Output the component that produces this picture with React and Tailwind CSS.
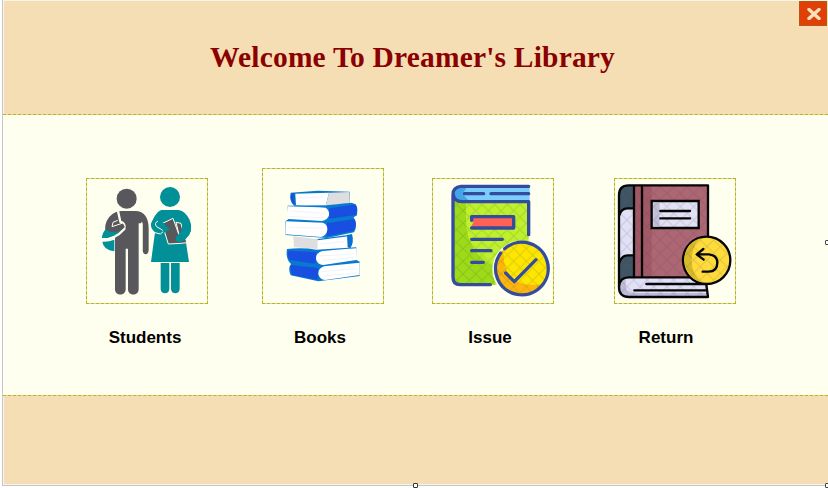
import React from "react";

function StudentsIcon() {
  return (
    <svg viewBox="21 57 360 372" className="block h-[124px] w-[120px] bg-[#fffff0]">
      <g fill="#58575c">
        <circle cx="140" cy="116" r="30" />
        <path d="M122 153H166C193 153 206 174 206 205V270C206 287 188 287 188 270V190H176V388C176 409 144 409 144 388V266H137V388C137 409 105 409 105 388V232L78 215Q72 204 80 183Q92 157 122 153Z" />
      </g>
      <path d="M77 208Q66 220 66 234Q90 236 107 225L128 207Q98 224 77 208ZM67 245Q70 270 103 274V239Q87 246 67 245Z" fill="#018f98" />
      <path d="M66 239Q105 239 133 207Q137 190 121 185L114 153" fill="none" stroke="#fffff0" strokeWidth="7" />
      <path d="M78 205Q93 223 119 213L134 202Q132 190 123 190L104 197L111 182L101 190L98 203" fill="#58575c" />
      <path d="M113 181L99 187L96 200L126 190" fill="none" stroke="#fffff0" strokeWidth="3" />
      <path d="M185 187V270" stroke="#fffff0" strokeWidth="4" />
      <g fill="#018f98">
        <circle cx="270" cy="111" r="30" />
        <path d="M244 150H296Q316 153 329 180Q342 213 316 235L327 306H213L225 217Q205 200 218 180Q229 155 244 150Z" />
        <path d="M242 309H268V386C268 404 242 404 242 386ZM273 309H299V386C299 404 273 404 273 386Z" />
      </g>
      <path d="M234 183Q221 190 230 200L252 213L241 222L217 216" fill="none" stroke="#fffff0" strokeWidth="3" />
      <path d="M246 191L279 175L297 225L318 238L320 248L303 250L265 252Z" fill="#58575c" stroke="#fffff0" strokeWidth="3" />
      <path d="M288 187L303 190L309 214L297 224Z" fill="#58575c" stroke="#fffff0" strokeWidth="3" />
      <path d="M303 180Q315 210 289 229Q281 248 302 247Q337 229 333 199Q325 170 307 166Z" fill="#018f98" />
      <path d="M245 199Q236 202 231 194Q240 191 233 183L250 189L270 208L251 219Z" fill="#018f98" />
    </svg>
  );
}

function BooksIcon() {
  return (
    <svg viewBox="24 27 360 402" className="block h-[134px] w-[120px] bg-[#fffff0]">
      <path d="M107 98L188 92L284 95L283 130L118 137Q101 124 107 98Z" fill="#0878c9" />
      <path d="M121 101L222 98L212 137L123 135Z" fill="#fff" />
      <path d="M222 98L283 96V129L212 137Z" fill="#dedddf" />
      <path d="M110 100H118V136Q103 121 110 100Z" fill="#194fda" />
      <path d="M98 137L214 136L290 128Q312 132 306 166L296 172Q310 195 297 217L216 234L92 225L91 184L100 178Z" fill="#087bd1" />
      <path d="M223 145L302 133Q311 148 302 165L223 176ZM216 190L298 177Q308 190 296 212L216 229Z" fill="#194fe0" />
      <path d="M99 139Q176 142 212 143Q224 151 222 166Q218 180 201 183L99 177ZM92 184L203 188Q218 193 217 209Q216 225 198 231L92 223Z" fill="#fff" />
      <path d="M115 229L188 238V267L117 262Z" fill="#dedddf" />
      <path d="M188 239L280 227L283 263L188 270Z" fill="#fff" />
      <path d="M188 239L280 227" stroke="#087bd1" strokeWidth="4" />
      <path d="M276 225L291 222Q298 246 286 265L278 262Z" fill="#0870cf" />
      <path d="M96 267Q143 262 184 269L304 262L303 299L314 305V348L190 364L107 346Q98 326 108 312Q91 296 96 267Z" fill="#0878d0" />
      <path d="M100 272L184 277L181 311L105 300Q95 290 100 272ZM107 315L190 324L188 359L112 345Q104 328 107 315Z" fill="#194fe0" />
      <path d="M304 265Q234 270 203 273Q182 278 183 296Q186 314 205 315L304 300ZM314 308L207 319Q189 325 190 342Q193 359 211 360L314 345Z" fill="#fff" />
      <path d="M125 114L208 111M110 153L208 160M105 170L205 173M102 203L208 204M196 252L268 245M193 288L295 282M202 302L294 292M200 335L303 326M204 348L303 339" fill="none" stroke="#e9edf5" strokeWidth="2" />
    </svg>
  );
}

function IssueIcon() {
  return (
    <svg viewBox="24 57 360 372" className="block h-[124px] w-[120px] bg-[#fffff0]">
      <defs>
        <pattern id="issue-lattice" width="38" height="38" patternUnits="userSpaceOnUse">
          <path d="M0 0L38 38M38 0L0 38" stroke="#576d30" strokeOpacity=".22" strokeWidth="3" />
        </pattern>
      </defs>
      <path d="M85 105Q91 125 110 125H311V374H105Q85 374 85 354Z" fill="#bef02c" />
      <path d="M85 110Q98 126 123 125V185Q126 277 210 321V374H103Q85 374 85 354Z" fill="#9dda18" />
      <path d="M314 78H108Q84 80 84 102Q88 124 110 124H314Z" fill="#7bcdfb" />
      <path d="M108 80Q90 84 90 101Q92 121 113 121H130L112 101L127 80Z" fill="#42a5e8" />
      <path d="M85 126H311V374H85Z" fill="url(#issue-lattice)" />
      <path d="M139 170H266V204H137L145 186Z" fill="#ff6254" />
      <g fill="none" stroke="#344c9e" strokeWidth="10" strokeLinecap="round" strokeLinejoin="round">
        <path d="M311 79H108Q84 81 84 104V352Q84 374 105 374H196M85 103Q88 125 110 125H311V224" />
        <path d="M118 101H176M198 101H311M140 181V170H266V204H140M140 238H232M140 272H198M140 307H175" />
      </g>
      <circle cx="288" cy="328" r="86" fill="#fffff0" />
      <circle cx="288" cy="328" r="79" fill="#ffe600" />
      <path d="M236 268Q198 302 211 349Q227 400 279 407Q328 410 353 373Q286 383 257 349Q232 321 236 268Z" fill="#ffb60b" />
      <circle cx="288" cy="328" r="78" fill="url(#issue-lattice)" />
      <path d="M239 266A79 79 0 1 1 227 279" fill="none" stroke="#344c9e" strokeWidth="10" strokeLinecap="round" />
      <path d="M242 339L268 365L333 299" fill="none" stroke="#344c9e" strokeWidth="10" strokeLinecap="round" strokeLinejoin="round" />
    </svg>
  );
}

function ReturnIcon() {
  return (
    <svg viewBox="24 57 360 372" className="block h-[124px] w-[120px] bg-[#fffff0]">
      <defs>
        <pattern id="return-lattice" width="40" height="40" patternUnits="userSpaceOnUse">
          <path d="M0 0L40 40M40 0L0 40" stroke="#443d4c" strokeOpacity=".16" strokeWidth="3" />
        </pattern>
      </defs>
      <path d="M36 106Q36 76 65 76H303V352H65L36 380Z" fill="#ad6673" />
      <path d="M36 106Q36 76 65 76H80V352H65L36 380Z" fill="#405565" />
      <path d="M36 169Q42 145 62 145H80V286H62Q44 286 36 312Z" fill="#e1e0f6" />
      <path d="M81 78H104V352H81ZM107 78H134V352H107Z" fill="#9d5361" fillOpacity=".65" />
      <path d="M303 352H64Q36 352 36 383Q36 411 66 411H303L298 378Z" fill="#e1e0f6" />
      <path d="M38 382Q43 411 68 411H303V399H80Q57 396 56 379V355Q39 361 38 382Z" fill="#bdbbd7" />
      <path d="M40 90L65 76H303V411H66L38 395Z" fill="url(#return-lattice)" />
      <g fill="none" stroke="#060606" strokeWidth="7" strokeLinejoin="round">
        <path d="M303 230V76H65Q36 76 36 106V382Q36 411 66 411H303L298 374M36 380Q38 352 65 352H255M81 76V352M105 76V352M36 169Q41 145 62 145H80M36 312Q42 286 62 286H80" />
        <path d="M118 372H298M82 391H298" strokeLinecap="round" />
      </g>
      <path d="M134 123H275V204H134Z" fill="#e2e1f5" stroke="#060606" strokeWidth="7" />
      <path d="M139 128H158V199H139Z" fill="#c1bfd7" />
      <path d="M137 126H272V201H137Z" fill="url(#return-lattice)" />
      <path d="M160 153H249M160 175H249" stroke="#060606" strokeWidth="7" strokeLinecap="round" />
      <circle cx="299" cy="301" r="71" fill="#ffdc3c" stroke="#060606" strokeWidth="7" />
      <path d="M282 234Q234 248 232 299Q236 354 283 367Q255 346 254 301Q254 257 282 234Z" fill="#d9ba29" />
      <circle cx="299" cy="301" r="67" fill="url(#return-lattice)" />
      <path d="M289 267L269 283L290 299M271 283H306Q331 286 331 308Q331 334 305 335H287" fill="none" stroke="#060606" strokeWidth="7" strokeLinecap="round" strokeLinejoin="round" />
    </svg>
  );
}

function Tile({ label, icon, labelClass = "" }) {
  return (
    <button type="button" className="flex w-[122px] shrink-0 flex-col items-center">
      <span className="block w-full border border-dashed border-[#b4b426] bg-[#dddc86]">{icon}</span>
      <span className={`mt-[22px] whitespace-nowrap text-[17px] leading-6 font-bold text-black ${labelClass}`}>{label}</span>
    </button>
  );
}

export default function App() {
  return (
    <div className="relative h-[488px] w-[828px] overflow-hidden bg-white pl-[2px] font-['Liberation_Sans',Arial,sans-serif]">
      <div className="flex h-[486px] flex-col border-b border-l border-[#c5c5ca] bg-[#f5deb3]">
        <header className="flex h-[114px] shrink-0 items-start border-t border-l border-[#faf4e7]">
          <h1 className="ml-[206px] mt-[36px] origin-left scale-x-[0.982] whitespace-nowrap font-['Liberation_Serif',serif] text-[30px] leading-[40px] font-bold tracking-[0.2px] text-[#8b0000]">
            Welcome To Dreamer's Library
          </h1>
        </header>
        <main className="h-[282px] shrink-0 border-y border-dashed border-[#b9b130] bg-[#e5d787]">
          <div className="flex h-full items-end bg-[#fffff0] pb-[45px] pl-[83px]">
            <Tile label="Students" icon={<StudentsIcon />} labelClass="-translate-x-[2px]" />
            <div className="ml-[54px]"><Tile label="Books" icon={<BooksIcon />} labelClass="-translate-x-[3px]" /></div>
            <div className="ml-[48px]"><Tile label="Issue" icon={<IssueIcon />} labelClass="-translate-x-[3px]" /></div>
            <div className="ml-[60px]"><Tile label="Return" icon={<ReturnIcon />} labelClass="-translate-x-[9px]" /></div>
          </div>
        </main>
        <footer className="flex-1 border-b border-l border-[#faf4e7]" />
      </div>
      <button type="button" aria-label="Close" className="absolute top-px right-px flex h-[25px] w-[28px] items-center justify-center border border-dashed border-[#9a651c] bg-[#e04006] pl-px">
        <svg viewBox="0 0 14 12" className="h-[12px] w-[14px]">
          <path d="M2 1.5L12 10.5M12 1.5L2 10.5" stroke="#f8e2bc" strokeWidth="3.4" strokeLinecap="round" />
        </svg>
      </button>
      <span className="absolute top-[240px] left-[825px] h-[5px] w-[5px] rounded-[1px] border border-[#444] bg-white" />
      <span className="absolute top-[483px] left-[413px] h-[5px] w-[5px] rounded-[1px] border border-[#333] bg-white" />
      <span className="absolute top-[483px] left-[825px] h-[5px] w-[5px] rounded-[1px] border border-[#444] bg-white" />
    </div>
  );
}
